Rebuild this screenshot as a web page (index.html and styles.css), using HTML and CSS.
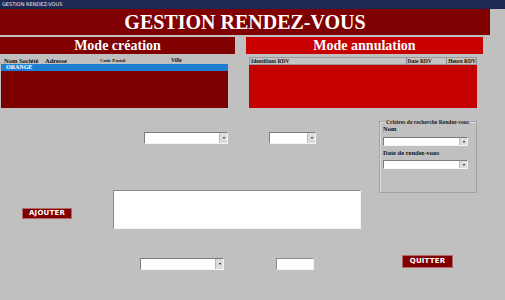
FILE: index.html
```html
<!DOCTYPE html>
<html lang="fr">
<head>
<meta charset="utf-8">
<title>GESTION RENDEZ-VOUS</title>
<link rel="stylesheet" href="styles.css">
</head>
<body>
<div class="window">
  <div class="titlebar">GESTION RENDEZ-VOUS</div>
  <div class="banner">GESTION RENDEZ-VOUS</div>
  <div class="modes">
    <div class="mode mode-create">Mode création</div>
    <div class="mode mode-cancel">Mode annulation</div>
  </div>
  <div class="lists">
    <div class="list-left">
      <div class="lhead">
        <span class="lh lh-nom">Nom Société</span>
        <span class="lh lh-adr">Adresse</span>
        <span class="lh lh-cp">Code Postal</span>
        <span class="lh lh-ville">Ville</span>
      </div>
      <div class="lbox">
        <div class="lsel">ORANGE</div>
      </div>
    </div>
    <div class="list-right">
      <div class="rhead">
        <span class="rh rh-id">Identifiant RDV</span>
        <span class="rh rh-date">Date RDV</span>
        <span class="rh rh-heure">Heure RDV</span>
      </div>
      <div class="rbox"></div>
    </div>
  </div>
  <div class="lower">
    <div class="left-col">
      <div class="row1">
        <div class="combo c-soc"><span class="dd"></span></div>
        <div class="combo c-small"><span class="dd"></span></div>
      </div>
      <div class="row2">
        <div class="btn btn-add">AJOUTER</div>
        <div class="memo"></div>
      </div>
      <div class="row3">
        <div class="combo c-bottom"><span class="dd"></span></div>
        <div class="textbox"></div>
      </div>
    </div>
    <div class="right-col">
      <div class="group">
        <span class="legend">Critères de recherche Rendez-vous</span>
        <div class="g-label">Nom</div>
        <div class="combo g-combo g-first"><span class="dd"></span></div>
        <div class="g-label g-label2">Date de rendez-vous</div>
        <div class="combo g-combo g-second"><span class="dd"></span></div>
      </div>
      <div class="btn btn-quit">QUITTER</div>
    </div>
  </div>
</div>
</body>
</html>
```

FILE: styles.css
```css
html, body {
  margin: 0;
  padding: 0;
  background: #c0c0c0;
}
.window {
  width: 505px;
  height: 300px;
  overflow: hidden;
  background: #c0c0c0;
  font-family: "Liberation Serif", serif;
}
.titlebar {
  height: 9px;
  background: #1f2852;
  color: #e8ecf5;
  font: 5px/9px "DejaVu Sans", sans-serif;
  padding-left: 2px;
}
.banner {
  width: 490px;
  height: 26px;
  background: #7f0000;
  color: #fff;
  font: bold 20px/27px "Liberation Serif", serif;
  text-align: center;
}
.modes {
  display: flex;
  margin-top: 2px;
  height: 17px;
}
.mode {
  color: #fff;
  font: bold 14px/17px "Liberation Serif", serif;
  text-align: center;
}
.mode-create {
  width: 235px;
  background: #800000;
}
.mode-cancel {
  width: 237px;
  margin-left: 11px;
  background: #c80000;
}
.lists {
  display: flex;
  margin-top: 3px;
  height: 51px;
}
.list-left {
  margin-left: 1px;
  width: 227px;
}
.lhead {
  height: 7px;
  display: flex;
  align-items: center;
  font-weight: bold;
  color: #111;
}
.lh {
  font-size: 6.5px;
  line-height: 7px;
  white-space: nowrap;
}
.lh-nom { margin-left: 3px; width: 41px; }
.lh-adr { width: 55px; }
.lh-cp { width: 71px; font-size: 5px; }
.lh-ville { font-size: 5.5px; }
.lbox {
  height: 44px;
  background: #7d0000;
}
.lsel {
  height: 7px;
  background: #1e7fd2;
  color: #fff;
  font: bold 6px/7px "Liberation Serif", serif;
  padding-left: 5px;
}
.list-right {
  margin-left: 21px;
  width: 228px;
}
.rhead {
  height: 8px;
  box-sizing: border-box;
  display: flex;
  border: 1px solid #9a9a9a;
  background: #c4c4c4;
}
.rh {
  font: bold 5.5px/6px "Liberation Serif", serif;
  color: #111;
  padding-left: 1px;
  white-space: nowrap;
  box-sizing: border-box;
}
.rh-id { width: 157px; }
.rh-date { width: 41px; border-left: 1px solid #8a8a8a; }
.rh-heure { flex: 1; border-left: 1px solid #8a8a8a; }
.rbox {
  height: 43px;
  background: #c40000;
}
.lower {
  display: flex;
}
.left-col {
  width: 378px;
}
.combo {
  box-sizing: border-box;
  height: 12px;
  background: #fff;
  border-style: solid;
  border-width: 1px;
  border-color: #7c7c7c #f4f4f4 #f4f4f4 #7c7c7c;
  display: flex;
  justify-content: flex-end;
}
.dd {
  width: 7px;
  background: #dcdcdc;
  border-left: 1px solid #b8b8b8;
  display: flex;
  align-items: center;
  justify-content: center;
}
.dd::after {
  content: "";
  border-left: 1.5px solid transparent;
  border-right: 1.5px solid transparent;
  border-top: 2px solid #111;
}
.row1 {
  display: flex;
  margin-top: 24px;
}
.c-soc { margin-left: 144px; width: 84px; }
.c-small { margin-left: 41px; width: 47px; }
.row2 {
  display: flex;
  margin-top: 46px;
}
.btn {
  box-sizing: border-box;
  background: #800000;
  border: 1px solid #b06a6a;
  color: #fff;
  font: bold 7px/10px "DejaVu Sans", sans-serif;
  letter-spacing: 0.2px;
  text-align: center;
}
.btn-add {
  margin-left: 22px;
  margin-top: 18px;
  width: 50px;
  height: 11px;
  line-height: 9px;
}
.memo {
  box-sizing: border-box;
  margin-left: 41px;
  width: 248px;
  height: 39px;
  background: #fff;
  border: 1px solid;
  border-color: #8a8a8a #f4f4f4 #f4f4f4 #8a8a8a;
}
.row3 {
  display: flex;
  margin-top: 29px;
}
.c-bottom { margin-left: 140px; width: 84px; }
.textbox {
  box-sizing: border-box;
  margin-left: 52px;
  width: 38px;
  height: 12px;
  background: #fff;
  border: 1px solid;
  border-color: #8a8a8a #f4f4f4 #f4f4f4 #8a8a8a;
}
.right-col {
  width: 127px;
}
.group {
  position: relative;
  box-sizing: border-box;
  margin-top: 13px;
  margin-left: 1px;
  width: 98px;
  height: 72px;
  border: 1px solid #a2a2a2;
  box-shadow: inset 1px 1px 0 #dedede;
  padding: 3px 0 0 3px;
}
.legend {
  position: absolute;
  top: -3px;
  left: 5px;
  padding: 0 1px;
  background: #c0c0c0;
  font: bold 5.6px/6px "Liberation Serif", serif;
  color: #222;
  white-space: nowrap;
}
.g-label {
  font: bold 6.5px/7px "Liberation Serif", serif;
  color: #111;
}
.g-label2 { margin-top: 3px; }
.g-combo {
  width: 85px;
  height: 9px;
}
.g-first { margin-top: 5px; }
.g-second { margin-top: 4px; }
.btn-quit {
  margin-top: 62px;
  margin-left: 24px;
  width: 51px;
  height: 13px;
  line-height: 11px;
}
```
